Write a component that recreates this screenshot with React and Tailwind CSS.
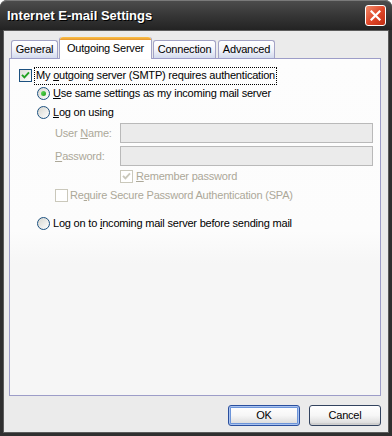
import React from 'react';

const FONT = "font-['Liberation_Sans',Arial,sans-serif]";

function Check({ checked, disabled }) {
  return (
    <span
      className={`flex h-[13px] w-[13px] shrink-0 items-center justify-center border ${
        disabled ? 'border-[#cac8bb] bg-white' : 'border-[#1c5180] bg-gradient-to-br from-[#dcdcd7] to-white'
      }`}
    >
      {checked && (
        <svg width="9" height="9" viewBox="0 0 9 9">
          <path d="M1 3.8 L3.4 6.3 L8 1.4" fill="none" stroke={disabled ? '#cac8bb' : '#21a121'} strokeWidth="1.9" />
        </svg>
      )}
    </span>
  );
}

function Radio({ checked }) {
  return (
    <span className="flex h-[13px] w-[13px] shrink-0 items-center justify-center rounded-full border border-[#1c5180] bg-gradient-to-br from-[#d6d6d0] to-white">
      {checked && <span className="h-[5px] w-[5px] rounded-full bg-gradient-to-br from-[#62e05c] to-[#1b9d18]" />}
    </span>
  );
}

function Tab({ label, width }) {
  return (
    <div
      className={`flex h-[18px] items-center justify-center rounded-t-[3px] border border-b-0 border-[#a3a3c6] bg-gradient-to-b from-white via-[#f4f4fa] to-[#d3dbee] ${width}`}
    >
      {label}
    </div>
  );
}

function Field({ label }) {
  return (
    <div className="flex h-[20px] items-center">
      <span className="box-content w-[65px] pl-[36px] text-[#aca899]">{label}</span>
      <div className="h-[20px] w-[253px] border border-[#b9b9b9] bg-[#ebebeb]" />
    </div>
  );
}

function Button({ children, primary }) {
  return (
    <button
      className={`flex h-[21px] w-[72px] items-center justify-center rounded-[3px] border bg-gradient-to-b from-white via-[#f6f6f6] to-[#d8d8d8] text-black ${
        primary ? 'border-[#2a4f9e] shadow-[inset_0_0_0_1px_#a9c3f0,inset_0_0_0_2px_#6d95d9]' : 'border-[#33435f] shadow-[inset_0_-2px_0_#cfcfcf]'
      }`}
    >
      {children}
    </button>
  );
}

export default function App() {
  return (
    <div className={`${FONT} h-[436px] w-[392px] bg-white text-[11px] tracking-[-0.2px] text-black`}>
      <div className="flex h-full w-full flex-col rounded-t-[7px] bg-[#2f2f2f]">
        <div className="flex h-[30px] shrink-0 items-center justify-between rounded-t-[7px] border-t border-[#7a7a7a] bg-gradient-to-b from-[#4c4c4c] via-[#363636] to-[#232323] pl-[7px] pr-[6px]">
          <span className="text-[13px] font-bold tracking-normal text-white [text-shadow:1px_1px_0_#000]">Internet E-mail Settings</span>
          <div className="flex h-[21px] w-[21px] items-center justify-center rounded-[3px] border border-white bg-gradient-to-br from-[#f08a6a] via-[#e0482a] to-[#c02c10]">
            <svg width="11" height="11" viewBox="0 0 11 11">
              <path d="M1.5 1.5 L9.5 9.5 M9.5 1.5 L1.5 9.5" stroke="white" strokeWidth="2.2" strokeLinecap="square" />
            </svg>
          </div>
        </div>

        <div className="mx-[3px] mb-[3px] flex flex-1 flex-col border border-[#5c5c5c] bg-[#ebebeb] pl-[5px] pt-[5px]">
          <div className="relative z-10 ml-[2px] flex h-[22px] items-end gap-[1px]">
            <Tab label="General" width="w-[47px]" />
            <div className="-mb-px flex h-[22px] w-[93px] flex-col rounded-t-[3px] border-x border-[#a3a3c6] bg-white">
              <div className="h-[3px] rounded-t-[3px] bg-gradient-to-b from-[#f9c24a] to-[#e8962c]" />
              <div className="flex flex-1 items-center justify-center pb-[2px]">Outgoing Server</div>
            </div>
            <Tab label="Connection" width="w-[63px]" />
            <div className="ml-[1px]">
              <Tab label="Advanced" width="w-[57px]" />
            </div>
          </div>

          <div className="flex h-[338px] w-[372px] flex-col border border-[#9d9dc8] bg-[linear-gradient(to_bottom,#fdfdfd_0px,#fcfcfc_172px,#f6f6f6_205px,#f6f6f6_100%)] pl-[9px]">
            <div className="mt-[10px] flex h-[13px] items-center">
              <Check checked />
              <span className="ml-[3px] flex h-[16px] items-center px-[1px] outline outline-1 outline-dotted outline-black">
                <span>My <u>o</u>utgoing server (SMTP) requires authentication</span>
              </span>
            </div>

            <div className="ml-[18px] mt-[5px] flex h-[13px] items-center gap-[3px]">
              <Radio checked />
              <span><u>U</u>se same settings as my incoming mail server</span>
            </div>

            <div className="ml-[18px] mt-[6px] flex h-[13px] items-center gap-[3px]">
              <Radio />
              <span><u>L</u>og on using</span>
            </div>

            <div className="mt-[4px]">
              <Field label={<>User <u>N</u>ame:</>} />
            </div>
            <div className="mt-[3px]">
              <Field label={<><u>P</u>assword:</>} />
            </div>

            <div className="ml-[101px] mt-[4px] flex h-[13px] items-center gap-[3px] text-[#aca899]">
              <Check checked disabled />
              <span><u>R</u>emember password</span>
            </div>

            <div className="ml-[36px] mt-[6px] flex h-[13px] items-center gap-[2px] text-[#aca899]">
              <Check disabled />
              <span>Re<u>q</u>uire Secure Password Authentication (SPA)</span>
            </div>

            <div className="ml-[18px] mt-[15px] flex h-[13px] items-center gap-[3px]">
              <Radio />
              <span>Log on to <u>i</u>ncoming mail server before sending mail</span>
            </div>
          </div>

          <div className="mt-[9px] flex w-[372px] justify-end gap-[9px]">
            <Button primary>OK</Button>
            <Button>Cancel</Button>
          </div>
        </div>
      </div>
    </div>
  );
}
